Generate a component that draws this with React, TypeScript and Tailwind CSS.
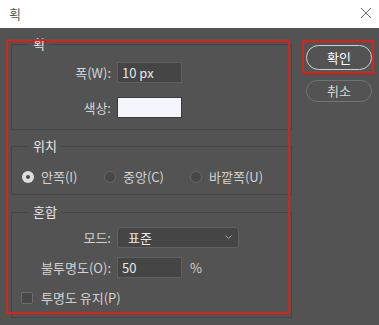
import React from 'react';

const font = { fontFamily: '"Noto Sans CJK KR", "Noto Sans", sans-serif' };

function Row({ label, children }: { label: string; children: React.ReactNode }) {
  return (
    <div className="flex items-center gap-[6px] h-[21px]">
      <span className="w-[99px] text-right text-[#d2d2d2]">{label}</span>
      {children}
    </div>
  );
}

function Radio({ checked, label, width }: { checked?: boolean; label: string; width: string }) {
  return (
    <div className={`flex items-center gap-[7px] ${width}`}>
      {checked ? (
        <span className="w-[12px] h-[12px] rounded-full bg-[#dedede] flex items-center justify-center">
          <span className="w-[4px] h-[4px] rounded-full bg-[#4a4a4a]" />
        </span>
      ) : (
        <span className="w-[12px] h-[12px] rounded-full bg-[#474747] border border-[#676767]" />
      )}
      <span className="text-[#d2d2d2]">{label}</span>
    </div>
  );
}

export default function App() {
  return (
    <div className="w-[379px] h-[325px] bg-[#535353] text-[13px] leading-[18px] overflow-hidden" style={font}>
      <div className="h-[28px] bg-white flex items-center justify-between pl-[9px] pr-[6px]">
        <span className="text-[#555] text-[13px]">획</span>
        <svg width="14" height="14" viewBox="0 0 14 14" className="mt-[-2px]">
          <path d="M2 2 L12 12 M12 2 L2 12" stroke="#777" strokeWidth="1" fill="none" />
        </svg>
      </div>

      <div className="relative flex pt-[9px]">
        <div className="ml-[11px] w-[281px] flex flex-col">
          <fieldset className="border border-[#464646] pt-[11px] pb-[11px]">
            <legend className="ml-[17px] px-[4px] leading-[14px] text-[#e6e6e6]">획</legend>
            <div className="flex flex-col gap-[14px]">
              <Row label="폭(W):">
                <div className="w-[65px] h-[21px] bg-[#454545] border border-[#606060] pl-[4px] flex items-center text-[#e8e8e8]">
                  10 px
                </div>
              </Row>
              <Row label="색상:">
                <div className="w-[65px] h-[21px] bg-[#f4f5fa] border border-[#3a3a3a]" />
              </Row>
            </div>
          </fieldset>

          <fieldset className="mt-[9px] border border-[#464646] pt-[15px] pb-[8px]">
            <legend className="ml-[17px] px-[4px] leading-[14px] text-[#e6e6e6]">위치</legend>
            <div className="flex items-center h-[18px] pl-[10px]">
              <Radio checked label="안쪽(I)" width="w-[82px]" />
              <Radio label="중앙(C)" width="w-[86px]" />
              <Radio label="바깥쪽(U)" width="w-[90px]" />
            </div>
          </fieldset>

          <fieldset className="mt-[10px] border border-[#464646] pt-[8px] pb-[10px]">
            <legend className="ml-[17px] px-[4px] leading-[14px] text-[#e6e6e6]">혼합</legend>
            <div className="flex flex-col gap-[9px]">
              <Row label="모드:">
                <div className="w-[122px] h-[21px] bg-[#454545] border border-[#616161] rounded-[3px] pl-[10px] pr-[6px] flex items-center justify-between text-[#e8e8e8]">
                  <span>표준</span>
                  <svg width="7" height="5" viewBox="0 0 7 5">
                    <path d="M0.5 0.5 L3.5 3.5 L6.5 0.5" stroke="#a8a8a8" strokeWidth="1" fill="none" />
                  </svg>
                </div>
              </Row>
              <Row label="불투명도(O):">
                <div className="w-[65px] h-[21px] bg-[#454545] border border-[#606060] pl-[4px] flex items-center text-[#e8e8e8]">
                  50
                </div>
                <span className="ml-[2px] text-[#d2d2d2]">%</span>
              </Row>
            </div>
            <div className="mt-[11px] flex items-center h-[18px] pl-[9px] gap-[8px]">
              <span className="w-[12px] h-[12px] rounded-[2px] bg-[#474747] border border-[#6c6c6c]" />
              <span className="text-[#d2d2d2]">투명도 유지(P)</span>
            </div>
          </fieldset>
        </div>

        <div className="ml-[14px] pt-[8px] flex flex-col gap-[10px]">
          <div className="relative">
            <button className="w-[66px] h-[25px] rounded-full border-[1.5px] border-[#cfcfcf] text-white text-[13px] flex items-center justify-center">
              확인
            </button>
            <span className="absolute -left-[4px] -top-[5px] w-[72px] h-[33px] border-2 border-[#d0261e] pointer-events-none" />
          </div>
          <button className="w-[66px] h-[22px] rounded-full border border-[#727272] text-[#d8d8d8] text-[13px] flex items-center justify-center">
            취소
          </button>
        </div>

        <div className="absolute left-[6px] top-[11px] w-[284px] h-[275px] border-2 border-[#d0261e] pointer-events-none" />
      </div>
    </div>
  );
}
